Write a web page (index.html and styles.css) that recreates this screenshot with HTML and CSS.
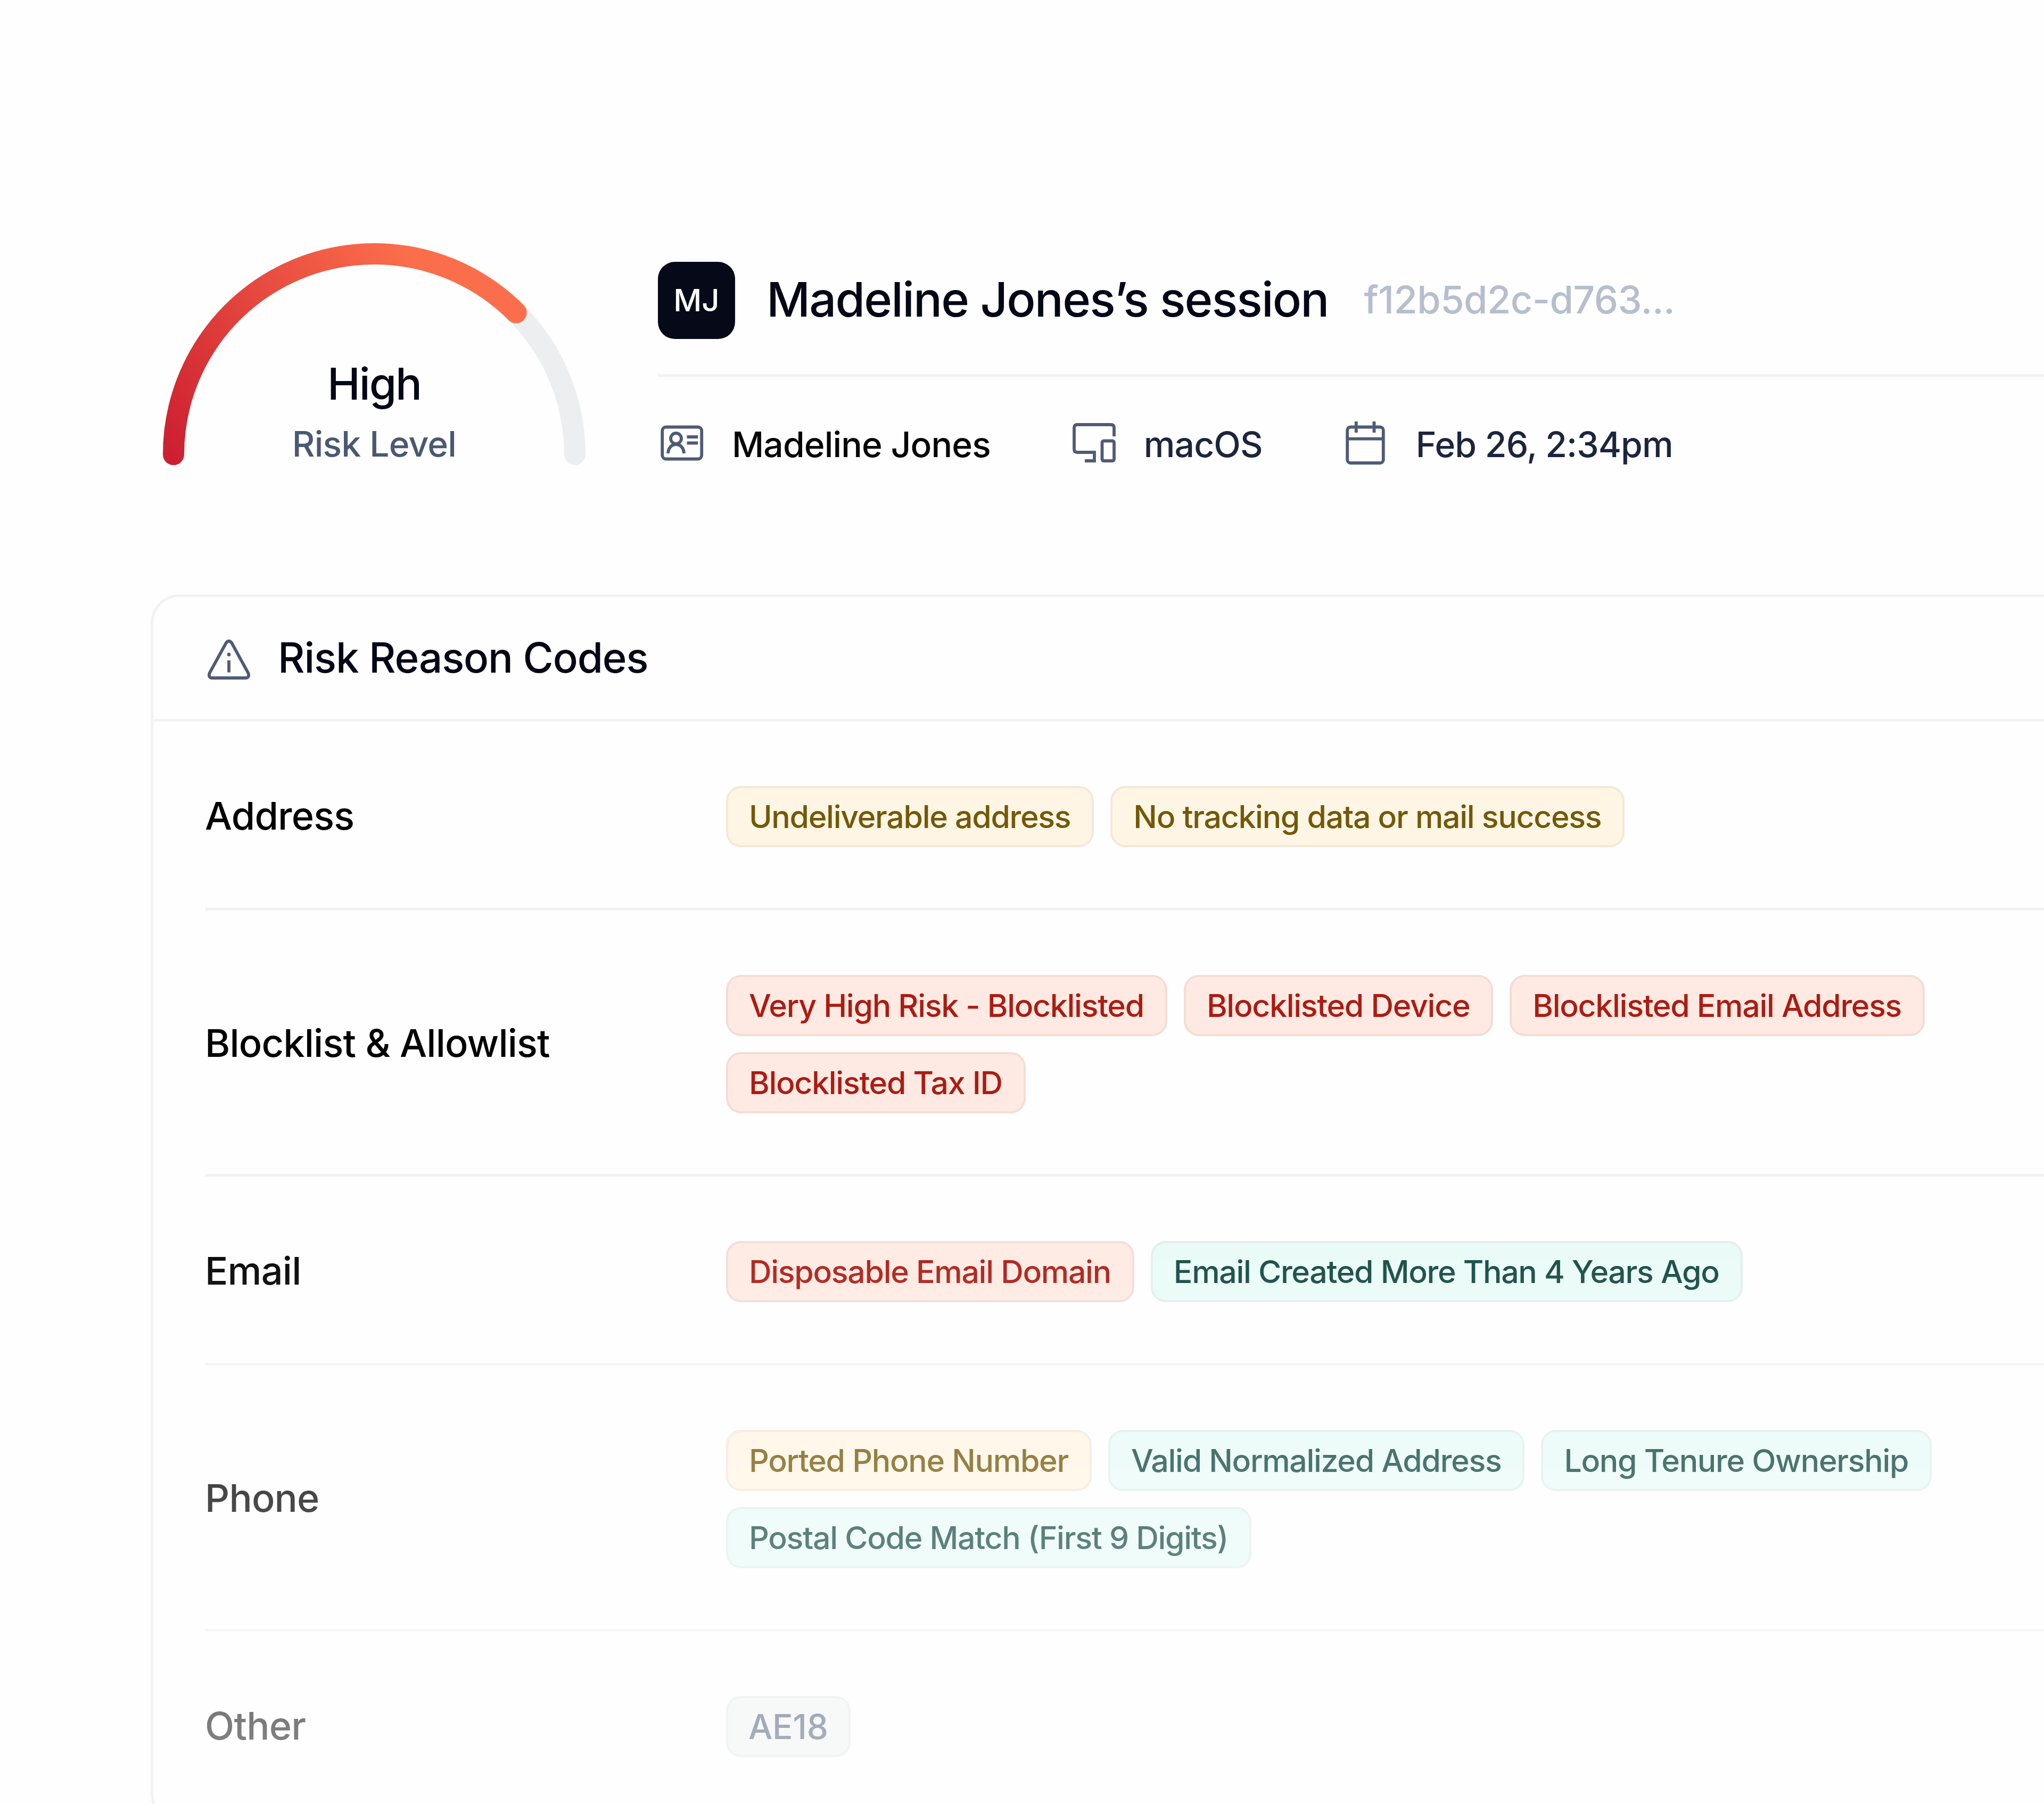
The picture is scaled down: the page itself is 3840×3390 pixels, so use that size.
FILE: index.html
```html
<!DOCTYPE html>
<html lang="en">
<head>
  <meta charset="UTF-8">
  <title>Madeline Jones's session</title>
  <link rel="stylesheet" href="styles.css">
</head>
<body>
  <main class="page">
    <header class="summary">
      <div class="gauge">
        <svg class="gauge-arc" viewBox="0 0 794 418" fill="none" stroke-width="40" stroke-linecap="round">
          <defs>
            <linearGradient id="risk" gradientUnits="userSpaceOnUse" x1="0" y1="380" x2="470" y2="30">
              <stop offset="0" stop-color="#cd1f31"/>
              <stop offset="1" stop-color="#fb6e4b"/>
            </linearGradient>
          </defs>
          <path d="M20 398A377 377 0 0 1 774 398" stroke="#eceef0"/>
          <path d="M20 398A377 377 0 0 1 663.6 131.4" stroke="url(#risk)"/>
        </svg>
        <div class="gauge-text">
          <div class="gauge-value">High</div>
          <div class="gauge-label">Risk Level</div>
        </div>
      </div>

      <div class="session">
        <div class="session-head">
          <div class="avatar">MJ</div>
          <h1 class="session-title">Madeline Jones’s session</h1>
          <span class="session-id">f12b5d2c-d763...</span>
        </div>
        <div class="meta">
          <div class="meta-item meta-name">
            <svg class="icon" viewBox="0 0 84 84">
              <rect x="5.2" y="10.5" width="74" height="60" rx="7"/>
              <circle cx="31" cy="32" r="10"/>
              <path d="M16 60C16.5 50 22.5 43 31 43S45.5 50 46 60M51.5 29H72M51.5 40.5H72"/>
            </svg>
            <span>Madeline Jones</span>
          </div>
          <div class="meta-item">
            <svg class="icon" viewBox="0 0 84 84">
              <path d="M80 28V12Q80 6 74 6H11Q5 6 5 12V52Q5 58 11 58H43V74H25"/>
              <rect x="57.5" y="36.5" width="22.5" height="37.5" rx="3"/>
            </svg>
            <span>macOS</span>
          </div>
          <div class="meta-item">
            <svg class="icon" viewBox="0 0 84 84">
              <rect x="7.2" y="10.5" width="67.6" height="67.5" rx="6"/>
              <path d="M23.8 0V21M57.5 0V21M8 32.7H75"/>
            </svg>
            <span>Feb 26, 2:34pm</span>
          </div>
        </div>
      </div>
    </header>

    <section class="card">
      <div class="card-head">
        <svg class="icon" viewBox="0 0 84 84">
          <path d="M36.5 13.5Q42 6 47.5 13.5L78.5 70Q81 79 73 79H11Q3 79 5.5 70ZM42 46V68.5"/>
          <circle class="icon-dot" cx="42" cy="35" r="3.4"/>
        </svg>
        <h2 class="card-title">Risk Reason Codes</h2>
      </div>

      <div class="rows">
        <div class="row">
          <div class="row-label">Address</div>
          <div class="tags">
            <span class="tag amber">Undeliverable address</span>
            <span class="tag amber">No tracking data or mail success</span>
          </div>
        </div>
        <div class="row">
          <div class="row-label">Blocklist &amp; Allowlist</div>
          <div class="tags">
            <span class="tag red">Very High Risk - Blocklisted</span>
            <span class="tag red">Blocklisted Device</span>
            <span class="tag red">Blocklisted Email Address</span>
            <span class="tag red">Blocklisted Tax ID</span>
          </div>
        </div>
        <div class="row">
          <div class="row-label">Email</div>
          <div class="tags">
            <span class="tag red">Disposable Email Domain</span>
            <span class="tag green">Email Created More Than 4 Years Ago</span>
          </div>
        </div>
        <div class="row">
          <div class="row-label">Phone</div>
          <div class="tags">
            <span class="tag amber">Ported Phone Number</span>
            <span class="tag green">Valid Normalized Address</span>
            <span class="tag green">Long Tenure Ownership</span>
            <span class="tag green">Postal Code Match (First 9 Digits)</span>
          </div>
        </div>
        <div class="row">
          <div class="row-label">Other</div>
          <div class="tags">
            <span class="tag gray">AE18</span>
          </div>
        </div>
      </div>
    </section>
  </main>
</body>
</html>
```
FILE: styles.css
```css
* {
  box-sizing: border-box;
}

body {
  margin: 0;
  background: #fefefe;
  color: #030616;
  font-family: Inter, "Liberation Sans", sans-serif;
  font-weight: 450;
}

.page {
  width: 3840px;
  height: 3390px;
  padding-top: 456px;
  overflow: hidden;
}

h1, h2 {
  margin: 0;
  font-weight: 500;
}

.icon {
  flex: none;
  width: 84px;
  height: 84px;
  fill: none;
  stroke: #4f5b76;
  stroke-width: 5.8;
}

.icon-dot {
  fill: #4f5b76;
  stroke: none;
}

/* Header */
.summary {
  display: flex;
  align-items: flex-start;
  gap: 136px;
  height: 661px;
  padding-left: 306px;
}

.gauge {
  display: grid;
  width: 794px;
  height: 418px;
}

.gauge-arc {
  grid-area: 1 / 1;
  width: 794px;
  height: 418px;
}

.gauge-text {
  grid-area: 1 / 1;
  padding-top: 215px;
  text-align: center;
}

.gauge-value {
  font-size: 83px;
  font-weight: 500;
  line-height: 100px;
  letter-spacing: -2px;
}

.gauge-label {
  margin-top: 13px;
  color: #4a5872;
  font-size: 66px;
  line-height: 100px;
  letter-spacing: -0.8px;
}

.session {
  flex: 1;
  padding-top: 36px;
}

.session-head {
  display: flex;
  align-items: center;
  height: 216px;
  padding-bottom: 66px;
  border-bottom: 5px solid #f2f2f2;
}

.avatar {
  width: 145px;
  height: 145px;
  border-radius: 32px;
  background: #060a18;
  color: #fff;
  font-size: 58px;
  line-height: 145px;
  text-align: center;
}

.session-title {
  margin-left: 59px;
  padding-bottom: 4px;
  font-size: 90px;
  line-height: 110px;
  letter-spacing: -1.85px;
}

.session-id {
  margin-left: 67px;
  padding-bottom: 4px;
  color: #b6bece;
  font-size: 72px;
  line-height: 90px;
  letter-spacing: -0.6px;
}

.meta {
  display: flex;
  gap: 152px;
  padding: 83px 0 0 3px;
}

.meta-item {
  display: flex;
  align-items: center;
  gap: 52px;
  color: #1c253d;
  font-size: 66px;
  line-height: 84px;
  letter-spacing: -0.9px;
}

.meta-item span {
  padding-top: 2px;
}

.meta-name {
  color: #060606;
}

/* Reason codes */
.card {
  margin-left: 283px;
  border: 5px solid #f2f2f2;
  border-right: 0;
  border-radius: 54px 0 0 54px;
}

.card-head {
  display: flex;
  align-items: center;
  gap: 50px;
  height: 234px;
  padding-left: 100px;
  border-bottom: 5px solid #f2f2f2;
}

.card-title {
  padding-bottom: 2px;
  font-size: 78px;
  line-height: 96px;
  letter-spacing: -1.1px;
}

.rows {
  padding-left: 97px;
  -webkit-mask-image: linear-gradient(#000 891px, transparent 2940px);
  mask-image: linear-gradient(#000 891px, transparent 2940px);
}

.row {
  display: flex;
  align-items: center;
  padding: 121px 0 114px;
  border-bottom: 5px solid #f2f2f2;
}

.row-label {
  width: 979px;
  padding-bottom: 4px;
  color: #000;
  font-size: 72px;
  line-height: 90px;
  letter-spacing: -0.8px;
}

.tags {
  display: flex;
  flex-wrap: wrap;
  gap: 30px 31px;
  width: 2400px;
}

.tag {
  height: 115px;
  padding: 0 40px 0 39px;
  border: 4px solid;
  border-radius: 28px;
  font-size: 59px;
  font-weight: 500;
  line-height: 108px;
  letter-spacing: -1.3px;
  white-space: nowrap;
}

.amber {
  background: #fff5e4;
  border-color: #f3e9d8;
  color: #735808;
}

.red {
  background: #feeae2;
  border-color: #f3ddd6;
  color: #ab1c13;
}

.green {
  background: #e9fbf7;
  border-color: #dff0eb;
  color: #11473f;
}

.gray {
  padding: 0 38px;
  background: #f0f3f3;
  border-color: #e6e8e8;
  color: #4e5a78;
  font-size: 64px;
  letter-spacing: -0.3px;
}
```
